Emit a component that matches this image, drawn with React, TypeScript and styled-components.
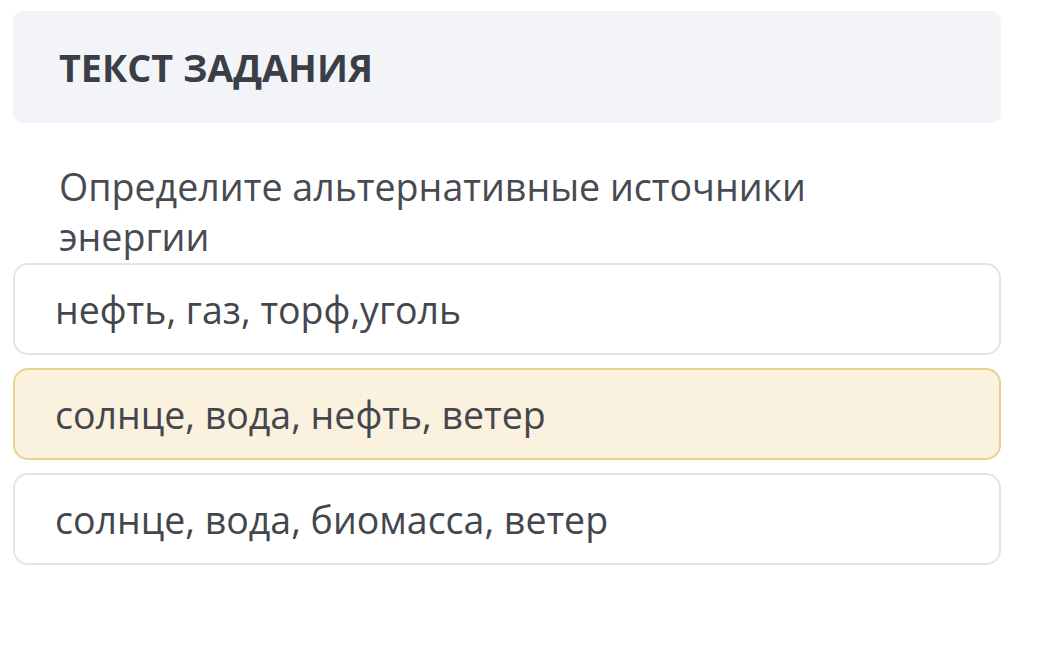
import React from "react";
import styled, { createGlobalStyle } from "styled-components";

const Global = createGlobalStyle`
  html, body { margin: 0; padding: 0; background: #ffffff; }
  body { font-family: "Open Sans", "Noto Sans", sans-serif; }
`;

const Page = styled.div`
  width: 1046px;
  height: 656px;
  box-sizing: border-box;
  padding: 11px 45px 0 13px;
  display: flex;
  flex-direction: column;
`;

const Header = styled.div`
  height: 112px;
  box-sizing: border-box;
  background: #f3f4f8;
  border-radius: 10px;
  display: flex;
  align-items: center;
  padding-left: 46px;
`;

const HeaderTitle = styled.h2`
  margin: 0;
  font-size: 37.7px;
  font-weight: 700;
  color: #3a3f47;
`;

const Question = styled.p`
  margin: 39px 0 1px 46px;
  font-size: 37.6px;
  line-height: 50px;
  color: #474b51;
  max-width: 800px;
`;

const Options = styled.div`
  display: flex;
  flex-direction: column;
  gap: 13px;
`;

const Option = styled.div<{ $selected?: boolean }>`
  height: 92px;
  box-sizing: border-box;
  border-radius: 15px;
  border: 2px solid ${(p) => (p.$selected ? "#e7d290" : "#e4e4e6")};
  background: ${(p) => (p.$selected ? "#faf2df" : "#ffffff")};
  display: flex;
  align-items: center;
  padding-left: 40px;
  font-size: 37.5px;
  color: #43474d;
`;

const options = [
  { text: "нефть, газ, торф,уголь", selected: false },
  { text: "солнце, вода, нефть, ветер", selected: true },
  { text: "солнце, вода, биомасса, ветер", selected: false },
];

export default function App() {
  return (
    <>
      <Global />
      <Page>
        <Header>
          <HeaderTitle>ТЕКСТ ЗАДАНИЯ</HeaderTitle>
        </Header>
        <Question>Определите альтернативные источники энергии</Question>
        <Options>
          {options.map((o) => (
            <Option key={o.text} $selected={o.selected}>
              {o.text}
            </Option>
          ))}
        </Options>
      </Page>
    </>
  );
}
